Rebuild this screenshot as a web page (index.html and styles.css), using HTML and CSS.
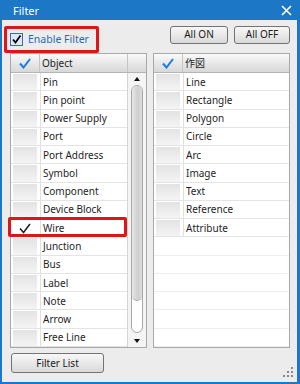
FILE: index.html
```html
<!DOCTYPE html>
<html lang="en">
<head>
  <meta charset="UTF-8">
  <title>Filter</title>
  <link rel="stylesheet" href="styles.css">
</head>
<body>

  <div class="window">
    <div class="titlebar">
      <span class="title">Filter</span>
      <svg class="close" width="11" height="11" viewBox="0 0 11 11"><path d="M1 1 L10 10 M10 1 L1 10" stroke="#fff" stroke-width="1.6"/></svg>
    </div>

    <div class="content">
      <div class="toolbar">
        <label class="enable marked">
          <svg width="13" height="13" viewBox="0 0 13 13">
            <rect x="0.5" y="0.5" width="12" height="12" fill="#dfe9f5" stroke="#3a6ea8"/>
            <path d="M3 6.5 L5.5 9.5 L10.5 2.5" fill="none" stroke="#000" stroke-width="1.8"/>
          </svg>
          <span>Enable Filter</span>
        </label>
        <div class="btns">
          <button class="btn btn-on">All ON</button>
          <button class="btn btn-off">All OFF</button>
        </div>
      </div>

      <div class="lists">
        <div class="list">
          <div class="head">
            <div class="hcheck"><svg width="12" height="11" viewBox="0 0 12 11"><path d="M1 5.5 L4.5 9.5 L11 1" fill="none" stroke="#1f7ae0" stroke-width="2"/></svg></div>
            <div class="htext">Object</div>
            <div class="hspace"></div>
          </div>
          <div class="body">
            <div class="rows">
              <div class="row"><div class="check"></div><div class="text">Pin</div></div>
              <div class="row"><div class="check"></div><div class="text">Pin point</div></div>
              <div class="row"><div class="check"></div><div class="text">Power Supply</div></div>
              <div class="row"><div class="check"></div><div class="text">Port</div></div>
              <div class="row"><div class="check"></div><div class="text">Port Address</div></div>
              <div class="row"><div class="check"></div><div class="text">Symbol</div></div>
              <div class="row"><div class="check"></div><div class="text">Component</div></div>
              <div class="row"><div class="check"></div><div class="text">Device Block</div></div>
              <div class="row marked"><div class="check on"><svg width="12" height="11" viewBox="0 0 12 11"><path d="M1 5.5 L4.5 9.5 L11 1" fill="none" stroke="#222" stroke-width="1.6"/></svg></div><div class="text">Wire</div></div>
              <div class="row"><div class="check"></div><div class="text">Junction</div></div>
              <div class="row"><div class="check"></div><div class="text">Bus</div></div>
              <div class="row"><div class="check"></div><div class="text">Label</div></div>
              <div class="row"><div class="check"></div><div class="text">Note</div></div>
              <div class="row"><div class="check"></div><div class="text">Arrow</div></div>
              <div class="row"><div class="check"></div><div class="text">Free Line</div></div>
            </div>
            <div class="scrollbar">
              <div class="arrow up"></div>
              <div class="track"><div class="thumb"></div></div>
              <div class="arrow down"></div>
            </div>
          </div>
        </div>

        <div class="list">
          <div class="head">
            <div class="hcheck"><svg width="12" height="11" viewBox="0 0 12 11"><path d="M1 5.5 L4.5 9.5 L11 1" fill="none" stroke="#1f7ae0" stroke-width="2"/></svg></div>
            <div class="htext cjk">作図</div>
          </div>
          <div class="body">
            <div class="rows">
              <div class="row"><div class="check"></div><div class="text">Line</div></div>
              <div class="row"><div class="check"></div><div class="text">Rectangle</div></div>
              <div class="row"><div class="check"></div><div class="text">Polygon</div></div>
              <div class="row"><div class="check"></div><div class="text">Circle</div></div>
              <div class="row"><div class="check"></div><div class="text">Arc</div></div>
              <div class="row"><div class="check"></div><div class="text">Image</div></div>
              <div class="row"><div class="check"></div><div class="text">Text</div></div>
              <div class="row"><div class="check"></div><div class="text">Reference</div></div>
              <div class="row"><div class="check"></div><div class="text">Attribute</div></div>
              <div class="row empty"></div>
              <div class="row empty"></div>
              <div class="row empty"></div>
              <div class="row empty"></div>
              <div class="row empty"></div>
              <div class="row empty"></div>
            </div>
          </div>
        </div>
      </div>

      <div class="footer">
        <button class="btn btn-list">Filter List</button>
      </div>
    </div>

    <svg class="grip" width="10" height="10" viewBox="0 0 10 10" fill="#8a8a8a">
      <rect x="8" y="0" width="2" height="2"/>
      <rect x="4" y="4" width="2" height="2"/><rect x="8" y="4" width="2" height="2"/>
      <rect x="0" y="8" width="2" height="2"/><rect x="4" y="8" width="2" height="2"/><rect x="8" y="8" width="2" height="2"/>
    </svg>
  </div>

</body>
</html>
```

FILE: styles.css
```css
body {
  margin: 0;
  padding: 0;
  font-family: "Noto Sans", "Noto Sans CJK JP", sans-serif;
  font-size: 10px;
  color: #1e1e1e;
}

.window {
  position: relative;
  width: 300px;
  height: 384px;
  box-sizing: border-box;
  border: 2px solid #1c77c7;
  border-top: none;
  border-right-width: 3px;
  background: #ececec;
  display: flex;
  flex-direction: column;
}

.titlebar {
  height: 20px;
  flex: none;
  background: #1c77c7;
  color: #fff;
  display: flex;
  align-items: center;
  justify-content: space-between;
  padding: 0 5px 0 11px;
  font-size: 11px;
}

.content {
  padding: 5px 7px 0 8px;
  display: flex;
  flex-direction: column;
}

.toolbar {
  height: 28px;
  display: flex;
  align-items: center;
  justify-content: space-between;
}

.enable {
  position: relative;
  display: flex;
  align-items: center;
  gap: 5px;
  color: #1f6cb8;
  font-size: 10.5px;
}

.enable.marked::after {
  content: "";
  position: absolute;
  left: -6px;
  top: -6px;
  width: 89px;
  height: 21px;
  border: 3px solid #e0151b;
  border-radius: 2px;
}

.btns {
  display: flex;
  gap: 6px;
  margin-top: -9px;
}

.btn {
  font-family: "Noto Sans", sans-serif;
  font-size: 10px;
  color: #1a1a1a;
  background: linear-gradient(#f7f7f7, #e9e9e9 50%, #d9d9d9);
  border: 1px solid #737373;
  border-radius: 3px;
  height: 18px;
  padding: 0;
  line-height: 15px;
}

.btn-on { width: 58px; }
.btn-off { width: 56px; }

.lists {
  display: flex;
  gap: 6px;
  height: 295px;
}

.list {
  width: 137px;
  box-sizing: border-box;
  border: 1px solid #a9a9a9;
  background: #fff;
  display: flex;
  flex-direction: column;
}

.head {
  height: 18px;
  flex: none;
  display: flex;
  background: linear-gradient(#fafafa, #e6e6e6 55%, #d8d8d8);
  border-bottom: 1px solid #b4b4b4;
}

.hcheck {
  width: 28px;
  flex: none;
  display: flex;
  align-items: center;
  justify-content: center;
  border-right: 1px solid #c4c4c4;
}

.htext {
  flex: 1;
  padding-left: 2px;
  line-height: 18px;
}

.hspace {
  width: 18px;
  border-left: 1px solid #c4c4c4;
}

.cjk {
  font-family: "Noto Sans CJK JP", sans-serif;
}

.body {
  flex: 1;
  display: flex;
}

.rows {
  flex: 1;
  display: flex;
  flex-direction: column;
}

.row {
  flex: 1;
  display: flex;
  position: relative;
  border-bottom: 1px solid #e4e4e4;
}

.row.empty {
  border-bottom-color: #eeeeee;
}

.check {
  width: 24px;
  flex: none;
  margin: 1px 3px 0 2px;
  background: linear-gradient(#e3e3e3, #f4f4f4);
  display: flex;
  align-items: center;
  justify-content: center;
}

.check.on {
  background: none;
}

.text {
  flex: 1;
  border-left: 1px solid #e0e0e0;
  padding-left: 2px;
  display: flex;
  align-items: center;
}

.row.marked::after {
  content: "";
  position: absolute;
  left: -3px;
  top: -2px;
  right: 0;
  bottom: -1px;
  border: 3px solid #e0151b;
  border-radius: 2px;
}

.scrollbar {
  width: 18px;
  flex: none;
  border-left: 1px solid #d4d4d4;
  background: #f4f4f4;
  display: flex;
  flex-direction: column;
  align-items: center;
}

.arrow {
  height: 12px;
  width: 100%;
  flex: none;
  position: relative;
}

.arrow::before {
  content: "";
  position: absolute;
  left: 6px;
  top: 4px;
  border-left: 3.5px solid transparent;
  border-right: 3.5px solid transparent;
}

.arrow.up::before {
  border-bottom: 4px solid #111;
}

.arrow.down::before {
  border-top: 4px solid #111;
}

.track {
  flex: 1;
  width: 12px;
  box-sizing: border-box;
  border: 1px solid #a8a8a8;
  border-radius: 6px;
  background: #fff;
  margin-bottom: 2px;
  overflow: hidden;
}

.thumb {
  height: 87%;
  border-radius: 5px;
  border-bottom: 1px solid #a8a8a8;
  background: linear-gradient(90deg, #e6e6e6, #cfcfcf 60%, #dcdcdc);
}

.footer {
  padding-top: 5px;
  padding-left: 1px;
}

.btn-list {
  width: 93px;
  height: 20px;
}

.grip {
  position: absolute;
  right: 4px;
  bottom: 5px;
}
```
